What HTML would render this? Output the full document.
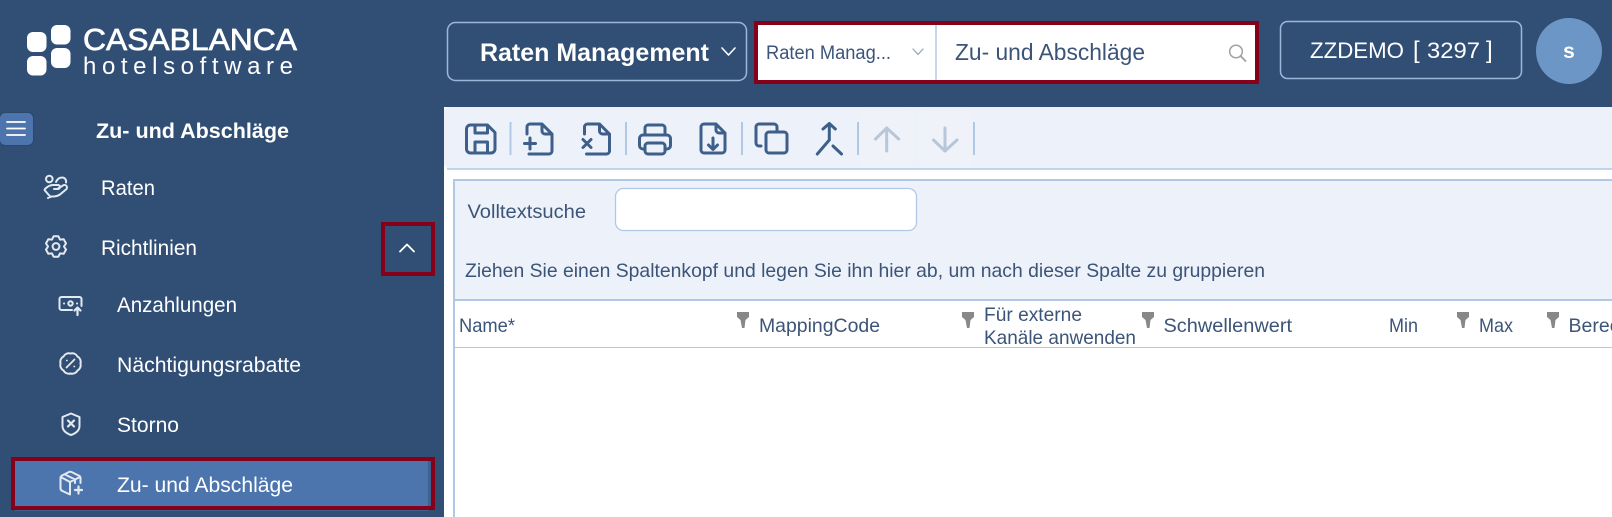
<!DOCTYPE html>
<html lang="de"><head><meta charset="utf-8"><title>Zu- und Abschläge</title>
<style>
html,body{margin:0;padding:0;width:1612px;height:517px;overflow:hidden;background:#fff}
svg{display:block}
text{font-family:"Liberation Sans",sans-serif}
.s{fill:#fff;font-size:21px}
.g{fill:#3b5478;font-size:19.5px}
.ti{fill:none;stroke:#3d5f8a;stroke-width:3;stroke-linecap:round;stroke-linejoin:round}
.di{fill:none;stroke:#b7c6d8;stroke-width:3;stroke-linecap:round;stroke-linejoin:round}
.si{fill:none;stroke:#e3e9f1;stroke-width:2;stroke-linecap:round;stroke-linejoin:round}
</style></head><body>
<svg width="1612" height="517" viewBox="0 0 1612 517" xmlns="http://www.w3.org/2000/svg">
<rect width="1612" height="517" fill="#fff"/>
<rect width="1612" height="107" fill="#314f75"/>
<rect width="444" height="517" fill="#314f75"/>

<!-- logo -->
<g fill="#fff">
<rect x="27" y="32" width="19.500" height="20" rx="6"/>
<rect x="51" y="25" width="19.500" height="19.500" rx="6"/>
<rect x="27" y="56" width="19.500" height="19.500" rx="6"/>
<rect x="51" y="48" width="19.500" height="20" rx="6"/>
</g>
<text x="83" y="50" font-size="31" fill="#fff" stroke="#fff" stroke-width=".7" textLength="214" lengthAdjust="spacingAndGlyphs">CASABLANCA</text>
<text x="83" y="74" font-size="24" fill="#fff" textLength="210" lengthAdjust="spacing">hotelsoftware</text>

<!-- Raten Management dropdown -->
<rect x="447.500" y="22.500" width="299" height="58" rx="8" fill="none" stroke="#9db7d8" stroke-width="1.500"/>
<text x="480" y="61" font-size="25" font-weight="700" fill="#fff" textLength="229" lengthAdjust="spacingAndGlyphs">Raten Management</text>
<path d="M722 48l6.500 7 6.500-7" fill="none" stroke="#fff" stroke-width="1.600" stroke-linecap="round" stroke-linejoin="round"/>

<!-- search box -->
<rect x="756" y="23" width="501" height="59" fill="#fff" stroke="#850018" stroke-width="4"/>
<path d="M936 25v55" stroke="#b0c8e6" stroke-width="1.500"/>
<text x="766" y="59" font-size="19" fill="#3b5478" textLength="125" lengthAdjust="spacingAndGlyphs">Raten Manag...</text>
<path d="M913 49l5 5.500 5-5.500" fill="none" stroke="#9aa5b3" stroke-width="1.300" stroke-linecap="round" stroke-linejoin="round"/>
<text x="955" y="60" font-size="23" fill="#3b5478" textLength="190" lengthAdjust="spacingAndGlyphs">Zu- und Abschläge</text>
<circle cx="1236" cy="51.500" r="6.300" fill="none" stroke="#a0a0a0" stroke-width="1.500"/>
<path d="M1240.500 56l5 5" stroke="#a0a0a0" stroke-width="1.800" stroke-linecap="round"/>

<!-- client button -->
<rect x="1280.500" y="21.500" width="241" height="57" rx="7" fill="none" stroke="#9db7d8" stroke-width="1.500"/>
<text x="1310" y="58" font-size="22" fill="#fff" textLength="94" lengthAdjust="spacingAndGlyphs">ZZDEMO</text>
<text x="1413" y="58" font-size="24" fill="#fff">[</text>
<text x="1427" y="58" font-size="22" fill="#fff" textLength="53" lengthAdjust="spacingAndGlyphs">3297</text>
<text x="1486" y="58" font-size="24" fill="#fff">]</text>
<ellipse cx="1569" cy="51" rx="33" ry="33" fill="#6b96c6"/>
<text x="1569" y="58" font-size="21" font-weight="700" fill="#fff" text-anchor="middle">s</text>

<!-- sidebar -->
<rect x="-1" y="112" width="35" height="34" rx="6" fill="#2b476b"/>
<rect x="0" y="113" width="33" height="32" rx="5" fill="#4d75ad"/>
<path d="M7 122h18M7 128.500h18M7 135h18" stroke="#fff" stroke-width="1.800" stroke-linecap="round"/>
<text x="96" y="138" font-size="21.500" font-weight="700" fill="#fff" textLength="193" lengthAdjust="spacingAndGlyphs">Zu- und Abschläge</text>

<text class="s" x="101" y="195" textLength="54" lengthAdjust="spacingAndGlyphs">Raten</text>
<g class="si">
<circle cx="49.300" cy="179" r="3.300"/>
<path d="M45 189q4-4 8-4h5a2 2 0 0 1 0 4h-4M58 188.500l5-3a2.500 2.500 0 0 1 3 4l-6 5q-3 2-7 2h-2l-3 1.500M44.500 190l6 7M56 182q2-4.500 6-4.500a4 4 0 0 1 4 5"/>
</g>

<text class="s" x="101" y="255" textLength="96" lengthAdjust="spacingAndGlyphs">Richtlinien</text>
<g class="si">
<path d="M53.600 236.300h4.800L60 239.600l3.700-.3 2.300 4.100-2 3.100 2 3.100-2.300 4.100-3.700-.3-1.600 3.300h-4.800L52 253.400l-3.700.3-2.300-4.100 2-3.100-2-3.100 2.300-4.100 3.700.3z"/>
<circle cx="56" cy="246.500" r="3.400"/>
</g>
<rect x="383" y="224" width="50" height="50" fill="none" stroke="#850018" stroke-width="4"/>
<path d="M400 251.500l7-7 7 7" fill="none" stroke="#fff" stroke-width="1.800" stroke-linecap="round" stroke-linejoin="round"/>

<text class="s" x="117" y="312" textLength="120" lengthAdjust="spacingAndGlyphs">Anzahlungen</text>
<g class="si">
<path d="M72 310H61.500a2 2 0 0 1-2-2v-9a2 2 0 0 1 2-2h18a2 2 0 0 1 2 2v7"/>
<circle cx="70.500" cy="303.500" r="2.200"/>
<path d="M64 303.500h.1M77 303.500h.1"/>
<path d="M77.500 315v-7M74.500 310.500l3-3 3 3" stroke-width="2.200"/>
</g>

<text class="s" x="117" y="372" textLength="184" lengthAdjust="spacingAndGlyphs">Nächtigungsrabatte</text>
<g class="si">
<path d="M70.500 353.500A6 6 0 0 1 77.500 356.500 6 6 0 0 1 80.500 363.500 6 6 0 0 1 77.500 370.500 6 6 0 0 1 70.500 373.500 6 6 0 0 1 63.500 370.500 6 6 0 0 1 60.500 363.500 6 6 0 0 1 63.500 356.500 6 6 0 0 1 70.500 353.500z"/>
<path d="M66.500 367.500l8-8M66.800 360.500h.1M74.200 366.500h.1" stroke-width="1.800"/>
</g>

<text class="s" x="117" y="432" textLength="62" lengthAdjust="spacingAndGlyphs">Storno</text>
<g class="si">
<path d="M71 413.500l8.500 3.500v9q0 6-8.500 9-8.500-3-8.500-9v-9z"/>
<path d="M68 420.500l6 6M74 420.500l-6 6" stroke-width="2.200"/>
</g>

<rect x="13" y="459" width="420" height="49" fill="#4d75ad" stroke="#850018" stroke-width="4"/>
<rect x="428" y="461" width="3" height="45" fill="#3f618f"/>
<rect x="15" y="510" width="413" height="1" fill="#4d75ad" opacity=".5"/>
<text class="s" x="117" y="492" textLength="176" lengthAdjust="spacingAndGlyphs">Zu- und Abschläge</text>
<g class="si">
<path d="M70 494.500l-7.500-3.500a3 3 0 0 1-2-2.500V478a3 3 0 0 1 1.500-2.500l7-3.500a3 3 0 0 1 2.500 0l7 3.500a3 3 0 0 1 2 2.500v5M60.800 477l9.200 5 10-5M70 482v12.500M65 474.500l10 5v3.500"/>
<path d="M78.500 486.500v7M75 490h7" stroke-width="2.200"/>
</g>

<!-- toolbar -->
<path d="M444 111a4 4 0 0 1 4-4H1612v62H450a6 6 0 0 1-6-6z" fill="#edf2fa"/>
<path d="M447 169H1612" stroke="#b0c8e6" stroke-width="1.500"/>
<rect x="860" y="111" width="54" height="56" rx="8" fill="#eff3f9"/>
<rect x="918" y="111" width="54" height="56" rx="8" fill="#eff3f9"/>
<g fill="#b0c8e6">
<rect x="509.500" y="122" width="2" height="33"/>
<rect x="625" y="122" width="2" height="33"/>
<rect x="741" y="122" width="2" height="33"/>
<rect x="857" y="122" width="2" height="33"/>
<rect x="973" y="122" width="2" height="33"/>
</g>
<g class="ti">
<path d="M470.500 125h17l7.500 7.500v16.500a4 4 0 0 1-4 4h-20.500a4 4 0 0 1-4-4v-20a4 4 0 0 1 4-4z"/>
<path d="M475 125.500v7.500h12.500v-7.500M475 153v-11h12.500v11"/>
<path d="M527 134v-7a3 3 0 0 1 3-3h12l10 10v17a3 3 0 0 1-3 3h-20M542 124v7a3 3 0 0 0 3 3h7"/>
<path d="M524.500 143.500h11M530 138v11"/>
<path d="M584.500 134v-7a3 3 0 0 1 3-3h12l10 10v17a3 3 0 0 1-3 3h-20M599.500 124v7a3 3 0 0 0 3 3h7"/>
<path d="M583 139.500l8 8M591 139.500l-8 8"/>
<path d="M645 135v-7a3 3 0 0 1 3-3h14a3 3 0 0 1 3 3v7"/>
<path d="M645 149h-2a3.500 3.500 0 0 1-3.500-3.500v-7a3.500 3.500 0 0 1 3.500-3.500h24a3.500 3.500 0 0 1 3.500 3.500v7a3.500 3.500 0 0 1-3.500 3.500h-2"/>
<rect x="645" y="143" width="20" height="11" rx="3"/>
<path d="M704 124h12l9 9v17a3 3 0 0 1-3 3h-18a3 3 0 0 1-3-3v-23a3 3 0 0 1 3-3zM716 124v6a3 3 0 0 0 3 3h6"/>
<path d="M713 138v11M708.500 145l4.500 4.500 4.500-4.500"/>
<path d="M761 146h-2a3 3 0 0 1-3-3v-16a3 3 0 0 1 3-3h15a3 3 0 0 1 3 3v3"/>
<rect x="766" y="132" width="21" height="21" rx="3"/>
<path d="M823 129l6.300-5.500 6 5.500M829.300 124v16l-12 14M833 146l8.500 8"/>
</g>
<g class="di">
<path d="M886.700 128v23M875.500 139l11.200-11 12 11"/>
<path d="M945 128v23M933.500 140l11.500 11 12-11"/>
</g>

<!-- grid -->
<rect x="455" y="181" width="1157" height="118" fill="#edf2fa"/>
<path d="M454 517V180H1612" fill="none" stroke="#b0c8e6" stroke-width="2"/>
<path d="M455 300H1612" stroke="#b0c8e6" stroke-width="2"/>
<path d="M455 347.500H1612" stroke="#b0c8e6" stroke-width="1"/>
<text class="g" x="467.500" y="218" textLength="118.500" lengthAdjust="spacingAndGlyphs">Volltextsuche</text>
<rect x="615.500" y="188.500" width="301" height="42" rx="8" fill="#fff" stroke="#b0c8e6" stroke-width="1.300"/>
<text class="g" x="465" y="277" textLength="800" lengthAdjust="spacingAndGlyphs">Ziehen Sie einen Spaltenkopf und legen Sie ihn hier ab, um nach dieser Spalte zu gruppieren</text>

<text class="g" x="459" y="332" textLength="56" lengthAdjust="spacingAndGlyphs">Name*</text>
<text class="g" x="759" y="332" textLength="121" lengthAdjust="spacingAndGlyphs">MappingCode</text>
<text class="g" x="984" y="321" textLength="98" lengthAdjust="spacingAndGlyphs">Für externe</text>
<text class="g" x="984" y="344" textLength="152" lengthAdjust="spacingAndGlyphs">Kanäle anwenden</text>
<text class="g" x="1163.500" y="332" textLength="128.500" lengthAdjust="spacingAndGlyphs">Schwellenwert</text>
<text class="g" x="1389" y="332" textLength="29" lengthAdjust="spacingAndGlyphs">Min</text>
<text class="g" x="1479" y="332" textLength="34" lengthAdjust="spacingAndGlyphs">Max</text>
<text class="g" x="1568.500" y="332">Berechnung</text>
<g fill="#888">
<polygon points="737,312 749,312 749,317 745.500,320 744.500,328 742,328 740.500,320 737,317"/>
<polygon points="962,312 974,312 974,317 970.500,320 969.500,328 967,328 965.500,320 962,317"/>
<polygon points="1142,312 1154,312 1154,317 1150.500,320 1149.500,328 1147,328 1145.500,320 1142,317"/>
<polygon points="1457,312 1469,312 1469,317 1465.500,320 1464.500,328 1462,328 1460.500,320 1457,317"/>
<polygon points="1547,312 1559,312 1559,317 1555.500,320 1554.500,328 1552,328 1550.500,320 1547,317"/>
</g>
</svg>
</body></html>
